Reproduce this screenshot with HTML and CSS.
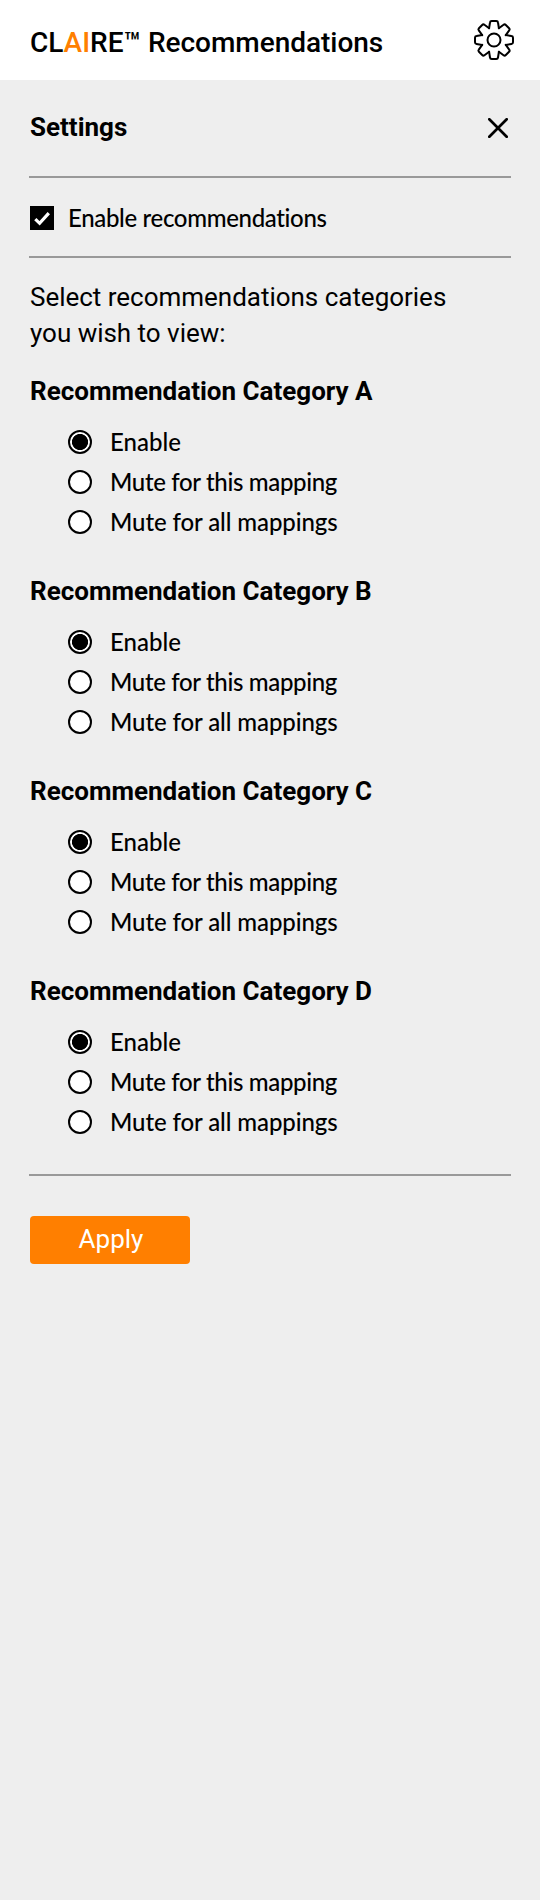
FILE: index.html
```html
<!DOCTYPE html>
<html lang="en">
<head>
<meta charset="utf-8">
<title>CLAIRE Recommendations</title>
<link rel="stylesheet" href="styles.css">
</head>
<body>
<header class="header">
  <h1 class="title">CL<span class="accent">AI</span>RE™ Recommendations</h1>
  <svg class="gear" viewBox="-21 -21 42 42" aria-label="Settings">
    <defs><path id="tooth" d="M-4.9-11.8L-4-17.5Q-3.8-19-2.3-19H2.3Q3.8-19 4-17.5L4.9-11.8"/></defs>
    <use href="#tooth"/><use href="#tooth" transform="rotate(45)"/><use href="#tooth" transform="rotate(90)"/><use href="#tooth" transform="rotate(135)"/><use href="#tooth" transform="rotate(180)"/><use href="#tooth" transform="rotate(225)"/><use href="#tooth" transform="rotate(270)"/><use href="#tooth" transform="rotate(315)"/>
    <circle r="6.5"/>
  </svg>
</header>
<main class="panel">
  <div class="settings">
    <h2 class="heading">Settings</h2>
    <svg class="close" viewBox="0 0 20 20" aria-label="Close"><path d="M1.3 1.3L18.7 18.7M18.7 1.3L1.3 18.7"/></svg>
  </div>
  <label class="master">
    <svg class="checkbox" viewBox="0 0 24 24"><path d="M5.3 13.2L9.6 17.3L18.8 7.2"/></svg>
    <span class="label">Enable recommendations</span>
  </label>
  <p class="intro">Select recommendations categories<br>you wish to view:</p>
  <section class="category">
    <h2 class="heading">Recommendation Category A</h2>
    <div class="option"><i class="radio on"></i><span class="label enable">Enable</span></div>
    <div class="option"><i class="radio"></i><span class="label">Mute for this mapping</span></div>
    <div class="option"><i class="radio"></i><span class="label all">Mute for all mappings</span></div>
  </section>
  <section class="category">
    <h2 class="heading">Recommendation Category B</h2>
    <div class="option"><i class="radio on"></i><span class="label enable">Enable</span></div>
    <div class="option"><i class="radio"></i><span class="label">Mute for this mapping</span></div>
    <div class="option"><i class="radio"></i><span class="label all">Mute for all mappings</span></div>
  </section>
  <section class="category">
    <h2 class="heading">Recommendation Category C</h2>
    <div class="option"><i class="radio on"></i><span class="label enable">Enable</span></div>
    <div class="option"><i class="radio"></i><span class="label">Mute for this mapping</span></div>
    <div class="option"><i class="radio"></i><span class="label all">Mute for all mappings</span></div>
  </section>
  <section class="category">
    <h2 class="heading">Recommendation Category D</h2>
    <div class="option"><i class="radio on"></i><span class="label enable">Enable</span></div>
    <div class="option"><i class="radio"></i><span class="label">Mute for this mapping</span></div>
    <div class="option"><i class="radio"></i><span class="label all">Mute for all mappings</span></div>
  </section>
  <footer class="footer"><button class="apply">Apply</button></footer>
</main>
</body>
</html>
```
FILE: styles.css
```css
* { box-sizing: border-box; }
body { margin: 0; background: #eee; color: #000; font-family: Roboto, sans-serif; min-height: 1900px; }
h1, h2, p { margin: 0; }
svg { display: block; flex: none; fill: none; stroke: #000; stroke-linecap: round; stroke-linejoin: round; }
.header { height: 80px; background: #fff; display: flex; justify-content: space-between; padding: 19px 25px 0 30px; }
.title { font-size: 28px; line-height: 48px; font-weight: 500; letter-spacing: -0.03px; white-space: nowrap; }
.accent { color: #ff7f00; }
.gear { width: 42px; height: 42px; stroke-width: 2; }
.panel { padding: 0 29px; }
.settings { height: 98px; border-bottom: 2px solid #999; display: flex; justify-content: space-between; padding: 27px 3px 0 1px; }
.heading { font-size: 26px; line-height: 40px; font-weight: 700; white-space: nowrap; }
.close { width: 20px; height: 20px; margin-top: 11px; stroke-width: 2.7; }
.master { height: 80px; border-bottom: 2px solid #999; display: flex; padding: 28px 0 0 1px; gap: 14px; }
.checkbox { width: 24px; height: 24px; background: #000; stroke: #fff; stroke-width: 3.2; stroke-linecap: butt; stroke-linejoin: miter; }
.label { font: 500 24px/24px Lato, sans-serif; letter-spacing: -0.34px; font-variant-ligatures: none; white-space: nowrap; }
.label.enable { letter-spacing: 0; }
.label.all { letter-spacing: -0.1px; }
.intro { padding: 21px 0 0 1px; font-size: 26px; line-height: 36px; letter-spacing: -0.02px; white-space: nowrap; }
.category { height: 200px; padding-left: 1px; }
.category .heading { margin-bottom: 19px; }
.intro + .category { margin-top: 20px; }
.option { height: 40px; display: flex; padding-left: 38px; gap: 18px; }
.radio { flex: none; width: 24px; height: 24px; border: 2px solid #000; border-radius: 50%; background: #fff; }
.radio.on { background: radial-gradient(circle, #000 0 7.7px, #fff 8.4px); }
.footer { border-top: 2px solid #999; padding: 40px 1px 0; margin-top: 3px; }
.apply { display: block; width: 160px; height: 48px; border: 0; border-radius: 4px; padding: 0 0 2px 2px; background: #ff7f00; color: #fff; font: 400 26px/46px Roboto, sans-serif; }
```
